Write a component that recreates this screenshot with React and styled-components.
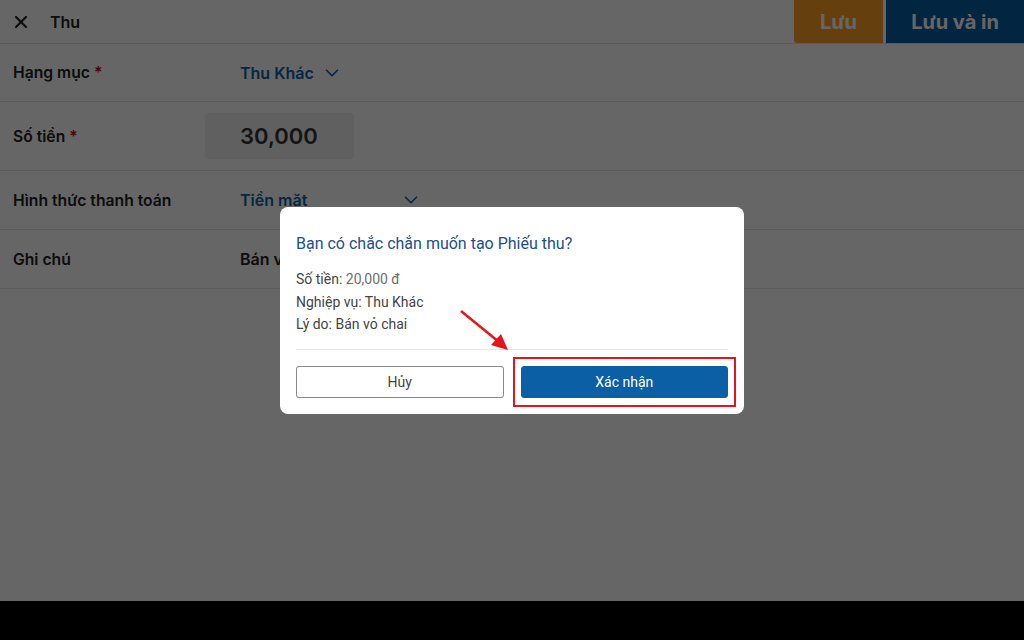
import React from "react";
import styled, { createGlobalStyle } from "styled-components";
import { X, ChevronDown } from "lucide-react";

const Global = createGlobalStyle`
  html, body { margin: 0; padding: 0; }
  body { font-family: Inter, "Noto Sans", sans-serif; background: #fff; }
  * { box-sizing: border-box; }
`;

const Page = styled.div`
  position: relative;
  width: 1024px;
  height: 640px;
  display: flex;
  flex-direction: column;
  overflow: hidden;
`;

const Header = styled.header`
  height: 44px;
  display: flex;
  align-items: center;
  border-bottom: 1px solid #e2e2e2;
  padding-left: 11px;
`;

const Title = styled.div`
  margin-left: 19px;
  font-size: 16px;
  font-weight: 600;
  color: #222;
  flex: 1;
`;

const Actions = styled.div`
  display: flex;
  align-self: stretch;
  gap: 3px;
`;

const ActionBtn = styled.button`
  border: none;
  height: 43px;
  width: ${(p) => p.$w}px;
  background: ${(p) => p.$bg};
  color: #fff;
  font-family: Inter, sans-serif;
  font-size: 20px;
  font-weight: 700;
  border-radius: ${(p) => (p.$first ? "0 0 0 3px" : "0")};
  padding: 0;
`;

const Form = styled.div`
  flex: 1;
  display: flex;
  flex-direction: column;
`;

const Row = styled.div`
  height: ${(p) => p.$h}px;
  display: grid;
  grid-template-columns: 192px 1fr;
  align-items: center;
  border-bottom: 1px solid #e6e6e6;
  padding-left: 13px;
`;

const Label = styled.div`
  font-size: 15.7px;
  font-weight: 600;
  color: #222;
`;

const Star = styled.span`
  color: #d0021b;
  margin-left: 4px;
`;

const Select = styled.div`
  display: flex;
  align-items: center;
  padding-left: 35px;
  width: ${(p) => p.$w || "auto"};
  justify-content: ${(p) => (p.$spread ? "space-between" : "flex-start")};
  gap: 7px;
  color: #0f5fa6;
  font-size: 16px;
  font-weight: 600;
`;

const AmountBox = styled.div`
  width: 149px;
  height: 46px;
  background: #f0f0f0;
  border-radius: 4px;
  display: flex;
  align-items: center;
  padding-left: 35px;
  font-size: 22px;
  font-weight: 600;
  color: #333;
`;

const NoteValue = styled.div`
  padding-left: 35px;
  font-size: 16px;
  font-weight: 600;
  color: #222;
`;

const BottomBar = styled.div`
  height: 39px;
  background: #000;
`;

const Overlay = styled.div`
  position: absolute;
  inset: 0 0 39px 0;
  background: rgba(0, 0, 0, 0.6);
  display: flex;
  justify-content: center;
  align-items: flex-start;
  padding-top: 207px;
`;

const Dialog = styled.div`
  position: relative;
  width: 464px;
  background: #fff;
  border-radius: 8px;
  padding: 26px 16px 16px;
  font-family: Roboto, "Noto Sans", sans-serif;
`;

const DialogTitle = styled.div`
  font-size: 16px;
  color: #1d4f8c;
  line-height: 22px;
`;

const Info = styled.div`
  margin-top: 15px;
  display: flex;
  flex-direction: column;
  gap: 3px;
  font-size: 14px;
  line-height: 19.5px;
  color: #444;
`;

const Muted = styled.span`
  color: #6e6e6e;
`;

const Divider = styled.div`
  height: 1px;
  background: #e6e6e6;
  margin: 14px 0 16px;
`;

const Buttons = styled.div`
  display: grid;
  grid-template-columns: 1fr 1fr;
  gap: 17px;
`;

const DlgBtn = styled.button`
  height: 32px;
  border-radius: 3px;
  font-family: Roboto, sans-serif;
  font-size: 14px;
  border: 1px solid ${(p) => (p.$primary ? "#0a5fa5" : "#8a8a8a")};
  background: ${(p) => (p.$primary ? "#0a5fa5" : "#fff")};
  color: ${(p) => (p.$primary ? "#fff" : "#444")};
`;

const Highlight = styled.div`
  position: absolute;
  left: 233px;
  top: 150px;
  width: 223px;
  height: 50px;
  border: 2px solid #e8141b;
  pointer-events: none;
`;

const Arrow = styled.svg`
  position: absolute;
  left: 175px;
  top: 98px;
  overflow: visible;
  pointer-events: none;
`;

export default function App() {
  return (
    <>
      <Global />
      <Page>
        <Header>
          <X size={20} strokeWidth={2.6} color="#222" />
          <Title>Thu</Title>
          <Actions>
            <ActionBtn $w={89} $bg="#ff9e24" $first>Lưu</ActionBtn>
            <ActionBtn $w={138} $bg="#075ca6">Lưu và in</ActionBtn>
          </Actions>
        </Header>
        <Form>
          <Row $h={58}>
            <Label>Hạng mục<Star>*</Star></Label>
            <Select>
              Thu Khác
              <ChevronDown size={22} strokeWidth={1.8} />
            </Select>
          </Row>
          <Row $h={69}>
            <Label>Số tiền<Star>*</Star></Label>
            <AmountBox>30,000</AmountBox>
          </Row>
          <Row $h={59}>
            <Label>Hình thức thanh toán</Label>
            <Select $spread $w="217px">
              Tiền mặt
              <ChevronDown size={22} strokeWidth={1.8} />
            </Select>
          </Row>
          <Row $h={59}>
            <Label>Ghi chú</Label>
            <NoteValue>Bán vỏ chai</NoteValue>
          </Row>
        </Form>
        <BottomBar />
        <Overlay>
          <Dialog>
            <DialogTitle>Bạn có chắc chắn muốn tạo Phiếu thu?</DialogTitle>
            <Info>
              <div>Số tiền: <Muted>20,000 đ</Muted></div>
              <div>Nghiệp vụ: Thu Khác</div>
              <div>Lý do: Bán vỏ chai</div>
            </Info>
            <Divider />
            <Buttons>
              <DlgBtn>Hủy</DlgBtn>
              <DlgBtn $primary>Xác nhận</DlgBtn>
            </Buttons>
            <Highlight />
            <Arrow width="60" height="50" viewBox="0 0 60 50">
              <line x1="6" y1="6" x2="44" y2="37" stroke="#e8141b" strokeWidth="2.5" />
              <polygon points="53,45 36,40 46,29" fill="#e8141b" />
            </Arrow>
          </Dialog>
        </Overlay>
      </Page>
    </>
  );
}
